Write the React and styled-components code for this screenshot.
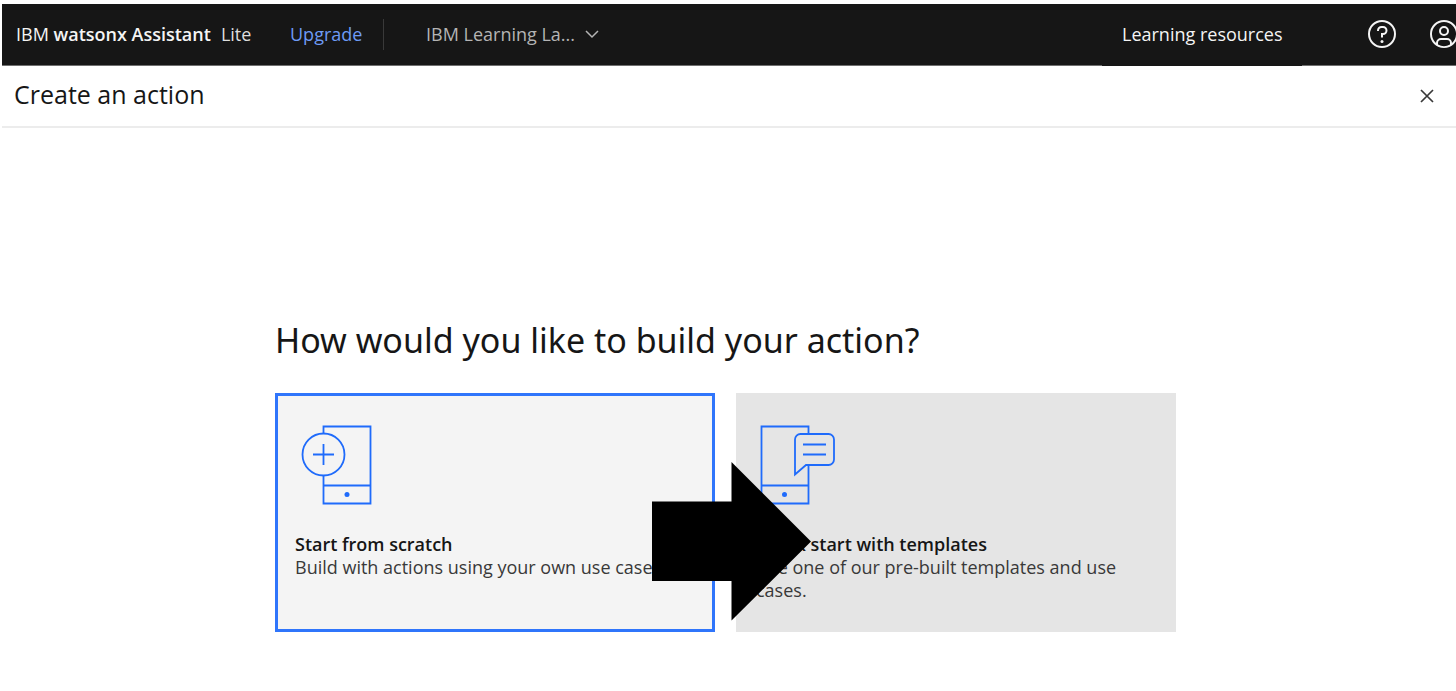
import React from "react";
import styled, { createGlobalStyle } from "styled-components";

const GlobalStyle = createGlobalStyle`
  *, *::before, *::after { box-sizing: border-box; }
  body {
    margin: 0;
    background: #ffffff;
    color: #161616;
    font-family: "Open Sans", "Noto Sans", sans-serif;
    overflow-x: hidden;
  }
  button { font: inherit; color: inherit; border: 0; background: none; padding: 0; cursor: pointer; }
  svg { display: block; flex: none; overflow: visible; }
`;

const Page = styled.div`
  padding: 4px 0 0 2px;
`;

const Header = styled.header`
  display: flex;
  align-items: stretch;
  justify-content: space-between;
  height: 62px;
  padding-bottom: 2px;
  overflow: hidden;
  background: #161616;
  box-shadow: inset 0 -1px 0 #6f6f6f;
  color: #f4f4f4;
  font-size: 18px;
  line-height: 24px;
  white-space: nowrap;
`;

const HeaderGroup = styled.div`
  display: flex;
  align-items: center;
`;

const Brand = styled.span`
  width: 274px;
  padding-left: 14px;
  b { font-weight: 600; }
`;

const Plan = styled.span`
  margin-left: 10px;
  color: #dedede;
`;

const UpgradeLink = styled.a`
  width: 107px;
  padding-left: 14px;
  color: #6e9bf5;
  text-decoration: none;
`;

const Divider = styled.span`
  width: 1px;
  height: 31px;
  background: #393939;
`;

const InstanceButton = styled.button`
  display: flex;
  align-items: center;
  gap: 10px;
  margin-left: 42px;
  color: #b4b4b4;
`;

const ResourcesButton = styled.button`
  align-self: stretch;
  width: 200px;
  margin-right: 64px;
  padding-left: 20px;
  text-align: left;
  background: #161616;
  box-shadow: 0 2px 0 #161616;
`;

const IconButton = styled.button`
  display: flex;
  width: 32px;
  margin-right: ${(p) => p.$gap || "0"};
`;

const TitleBar = styled.div`
  display: flex;
  align-items: center;
  justify-content: space-between;
  height: 62px;
  padding: 0 19px 0 12px;
  border-bottom: 2px solid #ececec;
`;

const Title = styled.h1`
  margin: 0;
  padding-bottom: 4px;
  font-size: 25px;
  line-height: 32px;
  font-weight: 400;
`;

const MainArea = styled.main`
  padding-right: 7px;
`;

const Chooser = styled.section`
  max-width: 901px;
  margin: 188px auto 0;
`;

const Question = styled.h2`
  margin: 0 0 29px;
  font-family: "Noto Sans", "Open Sans", sans-serif;
  font-size: 34px;
  line-height: 48px;
  font-weight: 400;
`;

const Cards = styled.div`
  position: relative;
  display: grid;
  grid-template-columns: 1fr 1fr;
  gap: 21px;
`;

const Card = styled.button`
  display: flex;
  flex-direction: column;
  align-items: flex-start;
  min-height: 239px;
  padding: 32px 20px 28px;
  text-align: left;
  font-size: 18px;
  line-height: 23px;
  background: ${(p) => (p.$selected ? "#f4f4f4" : "#e5e5e5")};
  box-shadow: ${(p) => (p.$selected ? "inset 0 0 0 3px #2f75fb" : "none")};

  svg { margin: 0 0 28px 6px; }
`;

const CardTitle = styled.strong`
  font-weight: 600;
`;

const CardText = styled.span`
  color: #393939;
`;

const Pointer = styled.svg`
  position: absolute;
  top: 69px;
  left: 377px;
  pointer-events: none;
`;

const ChevronIcon = () => (
  <svg width="14" height="14" viewBox="0 0 14 14" fill="none" stroke="currentColor" strokeWidth="1.5" aria-hidden="true">
    <path d="M1 4l6 6 6-6" />
  </svg>
);

const HelpIcon = () => (
  <svg width="32" height="32" viewBox="0 0 32 32" fill="currentColor" aria-hidden="true">
    <path d="M16,2A14,14,0,1,0,30,16,14,14,0,0,0,16,2Zm0,26A12,12,0,1,1,28,16,12,12,0,0,1,16,28Z" />
    <circle cx="16" cy="23.5" r="1.5" />
    <path d="M17,8H15.5A4.49,4.49,0,0,0,11,12.5V13h2v-.5A2.5,2.5,0,0,1,15.5,10H17a2.5,2.5,0,0,1,0,5H15v4.5h2V17a4.5,4.5,0,0,0,0-9Z" />
  </svg>
);

const UserIcon = () => (
  <svg width="32" height="32" viewBox="0 0 32 32" fill="currentColor" aria-hidden="true">
    <path d="M16,8a5,5,0,1,0,5,5A5,5,0,0,0,16,8Zm0,8a3,3,0,1,1,3-3A3,3,0,0,1,16,16Z" />
    <path d="M16,2A14,14,0,1,0,30,16,14.0158,14.0158,0,0,0,16,2ZM10,26.3765V25a3.0033,3.0033,0,0,1,3-3h6a3.0033,3.0033,0,0,1,3,3v1.3765a11.8989,11.8989,0,0,1-12,0Zm13.9925-1.4507A5.0016,5.0016,0,0,0,19,20H13a5.0016,5.0016,0,0,0-4.9925,4.9258,12,12,0,1,1,15.985,0Z" />
  </svg>
);

const CloseIcon = () => (
  <svg width="20" height="20" viewBox="0 0 20 20" fill="none" stroke="#393939" strokeWidth="1.7" aria-hidden="true">
    <path d="M4 4l12 12M16 4L4 16" />
  </svg>
);

const ScratchIcon = () => (
  <svg width="72" height="80" viewBox="0 0 72 80" fill="none" stroke="#1f6bfb" strokeWidth="1.8" aria-hidden="true">
    <path d="M22.5 9V1.5H69.5V78.5H22.5V51M22.5 60.5H69.5" />
    <circle cx="22.5" cy="29.5" r="21" />
    <path d="M22.5 19V40M12 29.5H33" />
    <circle cx="46" cy="69.5" r="2.5" fill="#1f6bfb" stroke="none" />
  </svg>
);

const TemplateIcon = () => (
  <svg width="76" height="80" viewBox="0 0 76 80" fill="none" stroke="#1f6bfb" strokeWidth="1.8" aria-hidden="true">
    <path d="M46.5 9V1.5H-0.5V78.5H46.5V40M-0.5 60.5H46.5" />
    <path d="M33 49.5V14.5a5.5 5.5 0 0 1 5.5-5.5H66.5a5.5 5.5 0 0 1 5.5 5.5V34.5a5.5 5.5 0 0 1-5.5 5.5H44Z" />
    <path d="M41 19.5H64M41 29.5H64" />
    <circle cx="22.5" cy="69.5" r="2.5" fill="#1f6bfb" stroke="none" />
  </svg>
);

export default function App() {
  return (
    <Page>
      <GlobalStyle />
      <Header>
        <HeaderGroup>
          <Brand>
            IBM <b>watsonx Assistant</b>
            <Plan>Lite</Plan>
          </Brand>
          <UpgradeLink href="#upgrade">Upgrade</UpgradeLink>
          <Divider />
          <InstanceButton type="button">
            IBM Learning La... <ChevronIcon />
          </InstanceButton>
        </HeaderGroup>
        <HeaderGroup>
          <ResourcesButton type="button">Learning resources</ResourcesButton>
          <IconButton type="button" aria-label="Help" $gap="30px">
            <HelpIcon />
          </IconButton>
          <IconButton type="button" aria-label="User profile" $gap="-4px">
            <UserIcon />
          </IconButton>
        </HeaderGroup>
      </Header>
      <TitleBar>
        <Title>Create an action</Title>
        <button type="button" aria-label="Close">
          <CloseIcon />
        </button>
      </TitleBar>
      <MainArea>
        <Chooser>
          <Question>How would you like to build your action?</Question>
          <Cards>
            <Card type="button" aria-pressed="true" $selected>
              <ScratchIcon />
              <CardTitle>Start from scratch</CardTitle>
              <CardText>Build with actions using your own use case.</CardText>
            </Card>
            <Card type="button" aria-pressed="false">
              <TemplateIcon />
              <CardTitle>Quick start with templates</CardTitle>
              <CardText>Use one of our pre-built templates and use cases.</CardText>
            </Card>
            <Pointer width="160" height="160" viewBox="0 0 160 160" aria-hidden="true">
              <path d="M0 39.5H79.5V0L159 79.5L79.5 158.5V119H0Z" fill="#000000" />
            </Pointer>
          </Cards>
        </Chooser>
      </MainArea>
    </Page>
  );
}
